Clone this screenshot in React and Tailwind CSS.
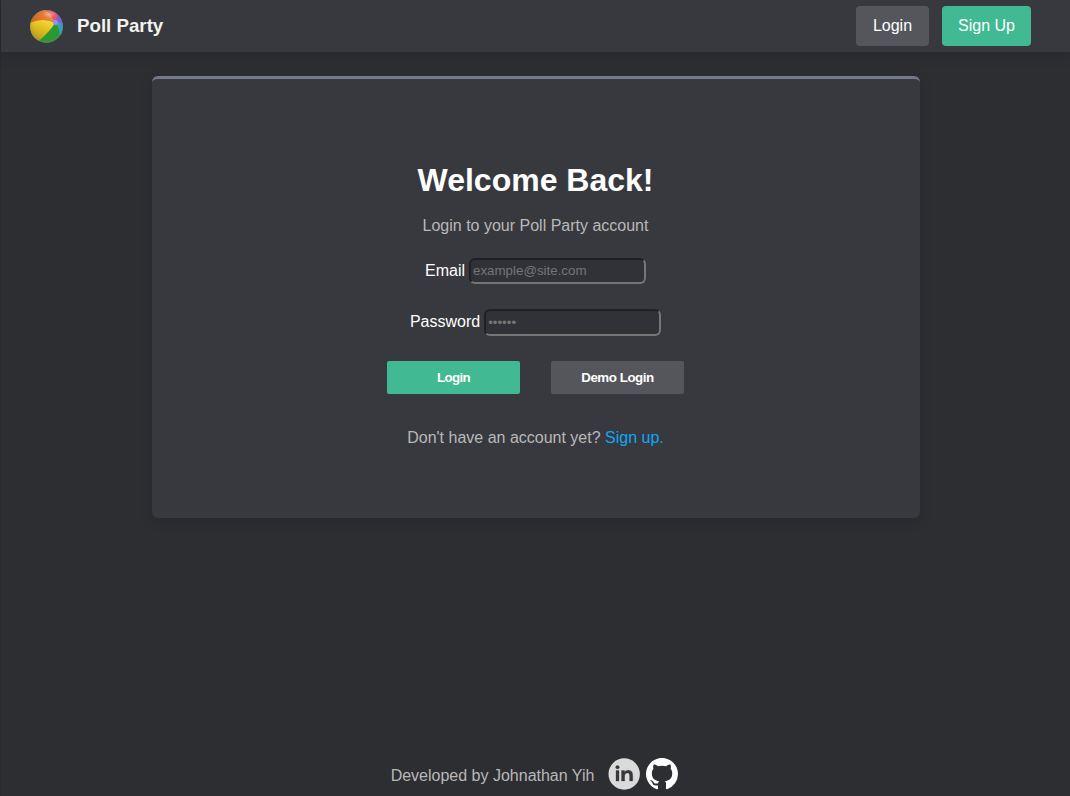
import React from "react";

function BeachBall() {
  return (
    <svg viewBox="0 0 34 34" className="mt-px block h-[33px] w-[33px]">
      <defs>
        <clipPath id="ball">
          <circle cx="17" cy="17" r="16.9" />
        </clipPath>
        <linearGradient id="yellow" x1="0.2" y1="1" x2="0.7" y2="0">
          <stop offset="0" stopColor="#b0921a" />
          <stop offset="0.55" stopColor="#dcbb1e" />
          <stop offset="1" stopColor="#f6dc34" />
        </linearGradient>
        <linearGradient id="orange" x1="0" y1="0.7" x2="1" y2="0.4">
          <stop offset="0" stopColor="#c06428" />
          <stop offset="0.6" stopColor="#e87a34" />
          <stop offset="1" stopColor="#f3905c" />
        </linearGradient>
        <radialGradient id="shade" cx="0.5" cy="0.47" r="0.54">
          <stop offset="0.75" stopColor="#666" stopOpacity="0" />
          <stop offset="1" stopColor="#888" stopOpacity="0.35" />
        </radialGradient>
        <radialGradient id="gloss">
          <stop offset="0" stopColor="#fff" stopOpacity="0.4" />
          <stop offset="1" stopColor="#fff" stopOpacity="0" />
        </radialGradient>
      </defs>
      <g clipPath="url(#ball)">
        <rect width="34" height="34" fill="#2b9833" />
        <path d="M0 11Q13 8 26 13Q21 22 9 32L0 34Z" fill="url(#yellow)" />
        <path d="M-1 13.5Q13 7.5 26 13Q23 6 17 0H-1Z" fill="url(#orange)" />
        <path d="M26 13Q22 5 16 -1H25L30 5Z" fill="#e9566c" />
        <path d="M26 13Q28 9 28 2L36 5V16Q31 12 26 13Z" fill="#9055df" />
        <path d="M26 13Q31 11 36 16V23L30.5 26Q30.5 18 26 13Z" fill="#35a0bd" />
        <circle cx="26.3" cy="13" r="2.6" fill="#8b96ee" />
        <ellipse cx="20" cy="4.5" rx="7" ry="4" fill="url(#gloss)" />
        <circle cx="17" cy="17" r="17" fill="url(#shade)" />
      </g>
    </svg>
  );
}

function LinkedIn() {
  return (
    <svg viewBox="0 0 32 32" className="block h-8 w-8">
      <circle cx="16.2" cy="16" r="15.7" fill="#dadada" />
      <g fill="#36373b" stroke="#36373b" strokeWidth="0.3">
        <circle cx="9.5" cy="9.2" r="1.8" />
        <path d="M8 12.6h3v10.4H8zM13.5 12.6h3v1.6c.6-1 1.8-1.9 3.6-1.9 3.7 0 4.6 2.3 4.6 5.2v5.5h-3.1v-5.1c0-1.6-.2-3-2.2-3-1.9 0-2.7 1.4-2.7 3v5.1h-3.2z" />
      </g>
    </svg>
  );
}

function GitHub() {
  return (
    <svg viewBox="0 0 16 16" className="block h-8 w-8" fill="#fff">
      <path d="M8 0C3.58 0 0 3.58 0 8c0 3.54 2.29 6.53 5.47 7.59.4.07.55-.17.55-.38 0-.19-.01-.82-.01-1.49-2.01.37-2.53-.49-2.69-.94-.09-.23-.48-.94-.82-1.13-.28-.15-.68-.52-.01-.53.63-.01 1.08.58 1.23.82.72 1.21 1.87.87 2.33.66.07-.52.28-.87.51-1.07-1.78-.2-3.64-.89-3.64-3.95 0-.87.31-1.59.82-2.15-.08-.2-.36-1.02.08-2.12 0 0 .67-.21 2.2.82.64-.18 1.32-.27 2-.27s1.36.09 2 .27c1.53-1.04 2.2-.82 2.2-.82.44 1.1.16 1.92.08 2.12.51.56.82 1.27.82 2.15 0 3.07-1.87 3.75-3.65 3.95.29.25.54.73.54 1.48 0 1.07-.01 1.93-.01 2.2 0 .21.15.46.55.38A8.01 8.01 0 0 0 16 8c0-4.42-3.58-8-8-8z" />
    </svg>
  );
}

function Field({ label, type, placeholder, labelClass, inputClass }) {
  return (
    <label className="flex items-center justify-center gap-1 leading-6 text-white">
      <span className={labelClass}>{label}</span>
      <input
        type={type}
        placeholder={placeholder}
        className={
          "w-[177px] rounded-[6px] border-2 border-t-[#1f2023] border-l-[#1f2023] border-r-[#767676] border-b-[#767676] bg-[#313237] px-0.5 text-[13.333px] leading-4 outline-none placeholder:text-[#757575] " +
          inputClass
        }
      />
    </label>
  );
}

export default function App() {
  return (
    <div className="flex h-[796px] flex-col border-l border-[#292a2d] bg-[#2d2e32] font-['Liberation_Sans',Arial,sans-serif] text-base">
      <header className="flex h-[52px] shrink-0 items-center justify-between bg-[#38393e] pr-[39px] pl-[29px] shadow-[0_4px_12px_rgba(0,0,0,0.12)]">
        <div className="flex items-center gap-3.5">
          <BeachBall />
          <span className="text-[18.72px] leading-7 font-bold text-[#f2f2ef]">Poll Party</span>
        </div>
        <nav className="flex gap-[13px] text-white">
          <button className="h-10 w-[73px] rounded-[4px] bg-[#55565b]">Login</button>
          <button className="h-10 w-[89px] rounded-[4px] bg-[#41b992]">Sign Up</button>
        </nav>
      </header>

      <main className="flex flex-1 justify-center pt-6">
        <section className="flex h-[442px] w-[768px] flex-col items-center rounded-[6px] border-t-[3px] border-[#747a8a] bg-[#38393e] pt-[82px] shadow-[0_4px_14px_rgba(0,0,0,0.12)]">
          <h1 className="text-[32px] leading-[38px] font-bold text-white">Welcome Back!</h1>
          <p className="mt-[15px] leading-6 text-[#b8b8b8]">Login to your Poll Party account</p>
          <form className="mt-5 flex flex-col items-center" onSubmit={(e) => e.preventDefault()}>
            <Field label="Email" type="email" placeholder="example@site.com" labelClass="mt-0" inputClass="h-[26px] pb-0.5" />
            <div className="mt-[25px]">
              <Field label="Password" type="password" placeholder="••••••" labelClass="-mt-0.5" inputClass="h-[27px]" />
            </div>
            <div className="mt-[25px] flex gap-[31px] text-[13.333px] font-bold text-white">
              <button className="h-[33px] w-[133px] rounded-[2px] bg-[#41b992] tracking-[-0.7px]">Login</button>
              <button className="h-[33px] w-[133px] rounded-[2px] bg-[#55565b] tracking-[-0.45px]">Demo Login</button>
            </div>
          </form>
          <p className="mt-8 leading-6 text-[#b8b8b8]">
            Don't have an account yet? <a className="text-[#0da9f5]">Sign up.</a>
          </p>
        </section>
      </main>

      <footer className="flex h-[44px] shrink-0 items-start justify-center pt-1.5 pr-0.5">
        <span className="mr-3.5 pt-1.5 leading-6 text-[#b8b8b8]">Developed by Johnathan Yih</span>
        <div className="flex gap-1.5">
          <LinkedIn />
          <GitHub />
        </div>
      </footer>
    </div>
  );
}
